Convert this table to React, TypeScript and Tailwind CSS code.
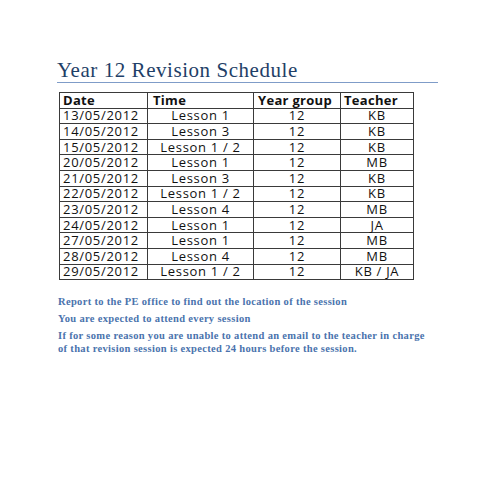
import React from 'react';

const rows: [string, string, string, string][] = [
  ['13/05/2012', 'Lesson 1', '12', 'KB'],
  ['14/05/2012', 'Lesson 3', '12', 'KB'],
  ['15/05/2012', 'Lesson 1 / 2', '12', 'KB'],
  ['20/05/2012', 'Lesson 1', '12', 'MB'],
  ['21/05/2012', 'Lesson 3', '12', 'KB'],
  ['22/05/2012', 'Lesson 1 / 2', '12', 'KB'],
  ['23/05/2012', 'Lesson 4', '12', 'MB'],
  ['24/05/2012', 'Lesson 1', '12', 'JA'],
  ['27/05/2012', 'Lesson 1', '12', 'MB'],
  ['28/05/2012', 'Lesson 4', '12', 'MB'],
  ['29/05/2012', 'Lesson 1 / 2', '12', 'KB / JA'],
];

const cell = 'border border-[#3a3a3a] h-[15.6px] p-0 leading-[13px] align-middle';

const App: React.FC = () => {
  return (
    <div className="w-[495px] h-[495px] bg-white pt-[60px] pl-[57px] overflow-hidden">
      <div className="w-[381px] border-b border-[#7f9cc8] pb-[2px]">
        <h1 className="font-['Liberation_Serif',serif] text-[21px] leading-[20px] text-[#1f3f68] tracking-[0.55px]">
          Year 12 Revision Schedule
        </h1>
      </div>

      <table className="ml-[2px] mt-[9px] border-collapse font-['Open_Sans',sans-serif] text-[13px] text-[#111] tracking-[0.7px]">
        <thead>
          <tr>
            <th className={`${cell} w-[88px] text-left pl-[3px] font-bold tracking-[0.3px]`}>Date</th>
            <th className={`${cell} w-[106px] text-left pl-[5px] font-bold tracking-[0.3px]`}>Time</th>
            <th className={`${cell} w-[87px] text-left pl-[4px] font-bold tracking-[0.3px]`}>Year group</th>
            <th className={`${cell} w-[73px] text-left pl-[3px] font-bold tracking-[0.3px]`}>Teacher</th>
          </tr>
        </thead>
        <tbody>
          {rows.map(([date, time, year, teacher]) => (
            <tr key={date}>
              <td className={`${cell} text-left pl-[3px]`}>{date}</td>
              <td className={`${cell} text-center`}>{time}</td>
              <td className={`${cell} text-center`}>{year}</td>
              <td className={`${cell} text-center`}>{teacher}</td>
            </tr>
          ))}
        </tbody>
      </table>

      <div className="mt-[15px] ml-[1px] w-[374px] font-['Liberation_Serif',serif] font-bold text-[10.5px] leading-[13px] text-[#4a73ad] tracking-[0.33px]">
        <p>Report to the PE office to find out the location of the session</p>
        <p className="mt-[4px]">You are expected to attend every session</p>
        <p className="mt-[4px]">
          If for some reason you are unable to attend an email to the teacher in charge of that revision session is expected 24 hours before the session.
        </p>
      </div>
    </div>
  );
};

export default App;
